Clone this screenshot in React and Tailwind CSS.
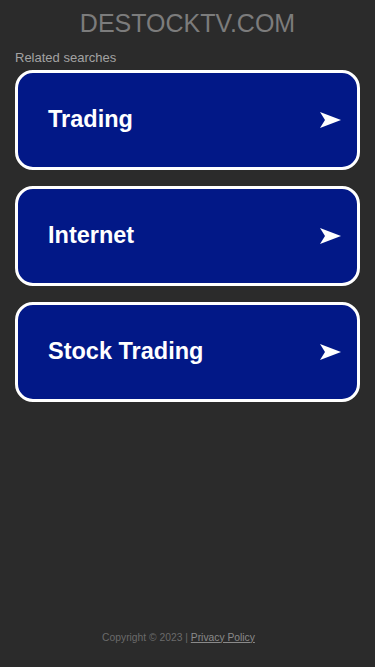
const ITEMS = ['Trading', 'Internet', 'Stock Trading'];

function Arrow() {
    return (
        <svg width="21" height="16" viewBox="0 0 21 16" className="shrink-0">
            <path d="M0 0 L21 8 L0 16 L5 8 Z" fill="#ffffff" />
        </svg>
    );
}

export default function App() {
    return (
        <div className="min-h-[667px] w-full bg-[#2b2b2b] flex flex-col font-['Liberation_Sans',Arial,sans-serif]">
            {/* Header */}
            <h1 className="pt-[9px] text-center text-[25px] leading-[28px] text-[#7c7c7c]">
                DESTOCKTV.COM
            </h1>

            <div className="px-[15px] pt-[14px]">
                <p className="text-[13px] leading-[14px] text-[#a3a3a3]">Related searches</p>

                <div className="mt-[5px] flex flex-col gap-[16px]">
                    {ITEMS.map((item) => (
                        <a
                            key={item}
                            href="#"
                            className="flex h-[100px] items-center justify-between rounded-[18px] border-[3px] border-white bg-[#021887] pl-[30px] pr-[16px]"
                        >
                            <span className="text-[23.5px] font-bold text-white">{item}</span>
                            <Arrow />
                        </a>
                    ))}
                </div>
            </div>

            {/* Footer */}
            <footer className="mt-auto pb-[22px] pr-[18px] text-center text-[10.3px] text-[#6a6a6a]">
                Copyright © 2023 | <a href="#" className="underline text-[#8a8a8a]">Privacy Policy</a>
            </footer>
        </div>
    );
}
